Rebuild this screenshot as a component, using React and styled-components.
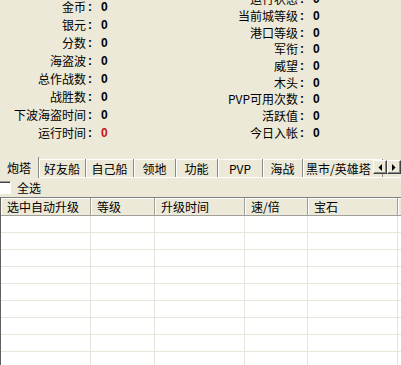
import React from "react";
import styled, { createGlobalStyle } from "styled-components";

const Global = createGlobalStyle`
  html, body { margin: 0; padding: 0; background: #ECE9D8; }
  body {
    width: 401px; height: 365px; overflow: hidden;
    font-family: "Noto Sans CJK SC", "Liberation Sans", sans-serif;
    font-size: 12px; color: #000;
  }
`;

const Window = styled.div`
  width: 401px;
  height: 365px;
  display: flex;
  flex-direction: column;
  overflow: hidden;
  background: #ECE9D8;
`;

const Stats = styled.div`
  height: 156px;
  display: flex;
  overflow: hidden;
  flex-shrink: 0;
`;

const StatColumn = styled.div`
  width: ${(p) => p.$width}px;
  margin-top: ${(p) => p.$offset}px;
  display: grid;
  grid-template-columns: ${(p) => p.$labelWidth}px 15px auto;
  grid-auto-rows: ${(p) => p.$rowHeight}px;
  align-items: center;
  align-content: start;
`;

const Label = styled.span`
  text-align: right;
  white-space: nowrap;
  line-height: 12px;
`;

const Colon = styled.span`
  font-family: "Liberation Sans", sans-serif;
  font-weight: bold;
  padding-left: 2px;
  line-height: 12px;
`;

const Value = styled.span`
  font-family: "Liberation Sans", sans-serif;
  font-weight: bold;
  color: ${(p) => (p.$red ? "#C81010" : "#000")};
  line-height: 12px;
`;

const TabBar = styled.div`
  height: 22px;
  display: flex;
  align-items: flex-end;
  position: relative;
  flex-shrink: 0;
  border-bottom: 1px solid #fff;
  box-sizing: border-box;
`;

const Tab = styled.div`
  width: ${(p) => p.$width}px;
  height: ${(p) => (p.$active ? 21 : 18)}px;
  flex-shrink: 0;
  box-sizing: border-box;
  display: flex;
  align-items: center;
  white-space: nowrap;
  overflow: hidden;
  border-right: 1px solid #8a8a86;
  box-shadow: ${(p) => (p.$active ? "none" : "inset 1px 1px 0 #fff")};
  background: #ECE9D8;
  margin-bottom: ${(p) => (p.$active ? -1 : 0)}px;
  padding-top: ${(p) => (p.$active ? 0 : 1)}px;
  justify-content: ${(p) => (p.$clip ? "flex-start" : "center")};
  padding-left: ${(p) => (p.$clip ? 3 : 0)}px;
`;

const Scroller = styled.div`
  position: absolute;
  right: 0;
  top: 4px;
  display: flex;
`;

const ScrollButton = styled.div`
  width: 14px;
  height: 14px;
  box-sizing: border-box;
  background: #ECE9D8;
  border-top: 1px solid #fff;
  border-left: 1px solid #fff;
  border-right: 1px solid #404040;
  border-bottom: 1px solid #404040;
  box-shadow: inset -1px -1px 0 #8a8a86;
  display: flex;
  align-items: center;
  justify-content: center;
`;

const CheckRow = styled.label`
  height: 19px;
  display: flex;
  align-items: center;
  gap: 6px;
  flex-shrink: 0;
  box-sizing: border-box;
`;

const CheckBox = styled.span`
  width: 13px;
  height: 13px;
  margin-left: -2px;
  box-sizing: border-box;
  background: #fff;
  border-top: 1px solid #9a9a96;
  border-left: 1px solid #9a9a96;
  border-right: 1px solid #fff;
  border-bottom: 1px solid #fff;
  box-shadow: inset 1px 1px 0 #404040;
`;

const List = styled.div`
  flex: 1;
  background: #fff;
  border-top: 1px solid #808080;
  border-left: 1px solid #606060;
  overflow: hidden;
`;

const COLS = "90px 64px 90px 63px 90px";

const HeaderRow = styled.div`
  display: grid;
  grid-template-columns: ${COLS} 1fr;
  height: 18px;
  background: #ECE9D8;
`;

const HeaderCell = styled.div`
  box-sizing: border-box;
  padding-left: 6px;
  display: flex;
  align-items: center;
  white-space: nowrap;
  border-right: 1px solid #a0a09a;
  border-bottom: 1px solid #a0a09a;
  box-shadow: inset 1px 1px 0 #fff;
`;

const BodyRow = styled.div`
  display: grid;
  grid-template-columns: ${COLS} 1fr;
  height: 17px;
`;

const BodyCell = styled.div`
  box-sizing: border-box;
  border-bottom: 1px solid #E8E6DA;
  border-right: ${(p) => (p.$last ? "none" : "1px solid #E8E6DA")};
`;

const Arrow = ({ dir }) => (
  <svg width="4" height="7" viewBox="0 0 4 7">
    {dir === "left" ? (
      <polygon points="4,0 4,7 0.5,3.5" fill="#000" />
    ) : (
      <polygon points="0,0 0,7 3.5,3.5" fill="#000" />
    )}
  </svg>
);

const left = [
  ["金币", "0"],
  ["银元", "0"],
  ["分数", "0"],
  ["海盗波", "0"],
  ["总作战数", "0"],
  ["战胜数", "0"],
  ["下波海盗时间", "0"],
  ["运行时间", "0", true],
];

const right = [
  ["运行状态", "0"],
  ["当前城等级", "0"],
  ["港口等级", "0"],
  ["军衔", "0"],
  ["威望", "0"],
  ["木头", "0"],
  ["PVP可用次数", "0"],
  ["活跃值", "0"],
  ["今日入帐", "0"],
];

const tabs = [
  ["炮塔", 39],
  ["好友船", 47],
  ["自己船", 48],
  ["领地", 42],
  ["功能", 42],
  ["PVP", 45],
  ["海战", 40],
  ["黑市/英雄塔", 80],
];

const headers = ["选中自动升级", "等级", "升级时间", "速/倍", "宝石"];

export default function App() {
  return (
    <Window>
      <Global />
      <Stats>
        <StatColumn $width={200} $offset={-2} $labelWidth={86} $rowHeight={18}>
          {left.map(([l, v, red]) => (
            <React.Fragment key={l}>
              <Label>{l}</Label>
              <Colon>:</Colon>
              <Value $red={red}>{v}</Value>
            </React.Fragment>
          ))}
        </StatColumn>
        <StatColumn $width={201} $offset={-9} $labelWidth={98} $rowHeight={16.7}>
          {right.map(([l, v]) => (
            <React.Fragment key={l}>
              <Label>{l}</Label>
              <Colon>:</Colon>
              <Value>{v}</Value>
            </React.Fragment>
          ))}
        </StatColumn>
      </Stats>
      <TabBar>
        {tabs.map(([t, w], i) => (
          <Tab key={t} $width={w} $active={i === 0} $clip={i === tabs.length - 1}>
            {t}
          </Tab>
        ))}
        <Scroller>
          <ScrollButton>
            <Arrow dir="left" />
          </ScrollButton>
          <ScrollButton>
            <Arrow dir="right" />
          </ScrollButton>
        </Scroller>
      </TabBar>
      <CheckRow>
        <CheckBox />
        全选
      </CheckRow>
      <List>
        <HeaderRow>
          {headers.map((h) => (
            <HeaderCell key={h}>{h}</HeaderCell>
          ))}
          <HeaderCell />
        </HeaderRow>
        {Array.from({ length: 9 }).map((_, r) => (
          <BodyRow key={r}>
            {headers.map((h) => (
              <BodyCell key={h} />
            ))}
            <BodyCell $last />
          </BodyRow>
        ))}
      </List>
    </Window>
  );
}
